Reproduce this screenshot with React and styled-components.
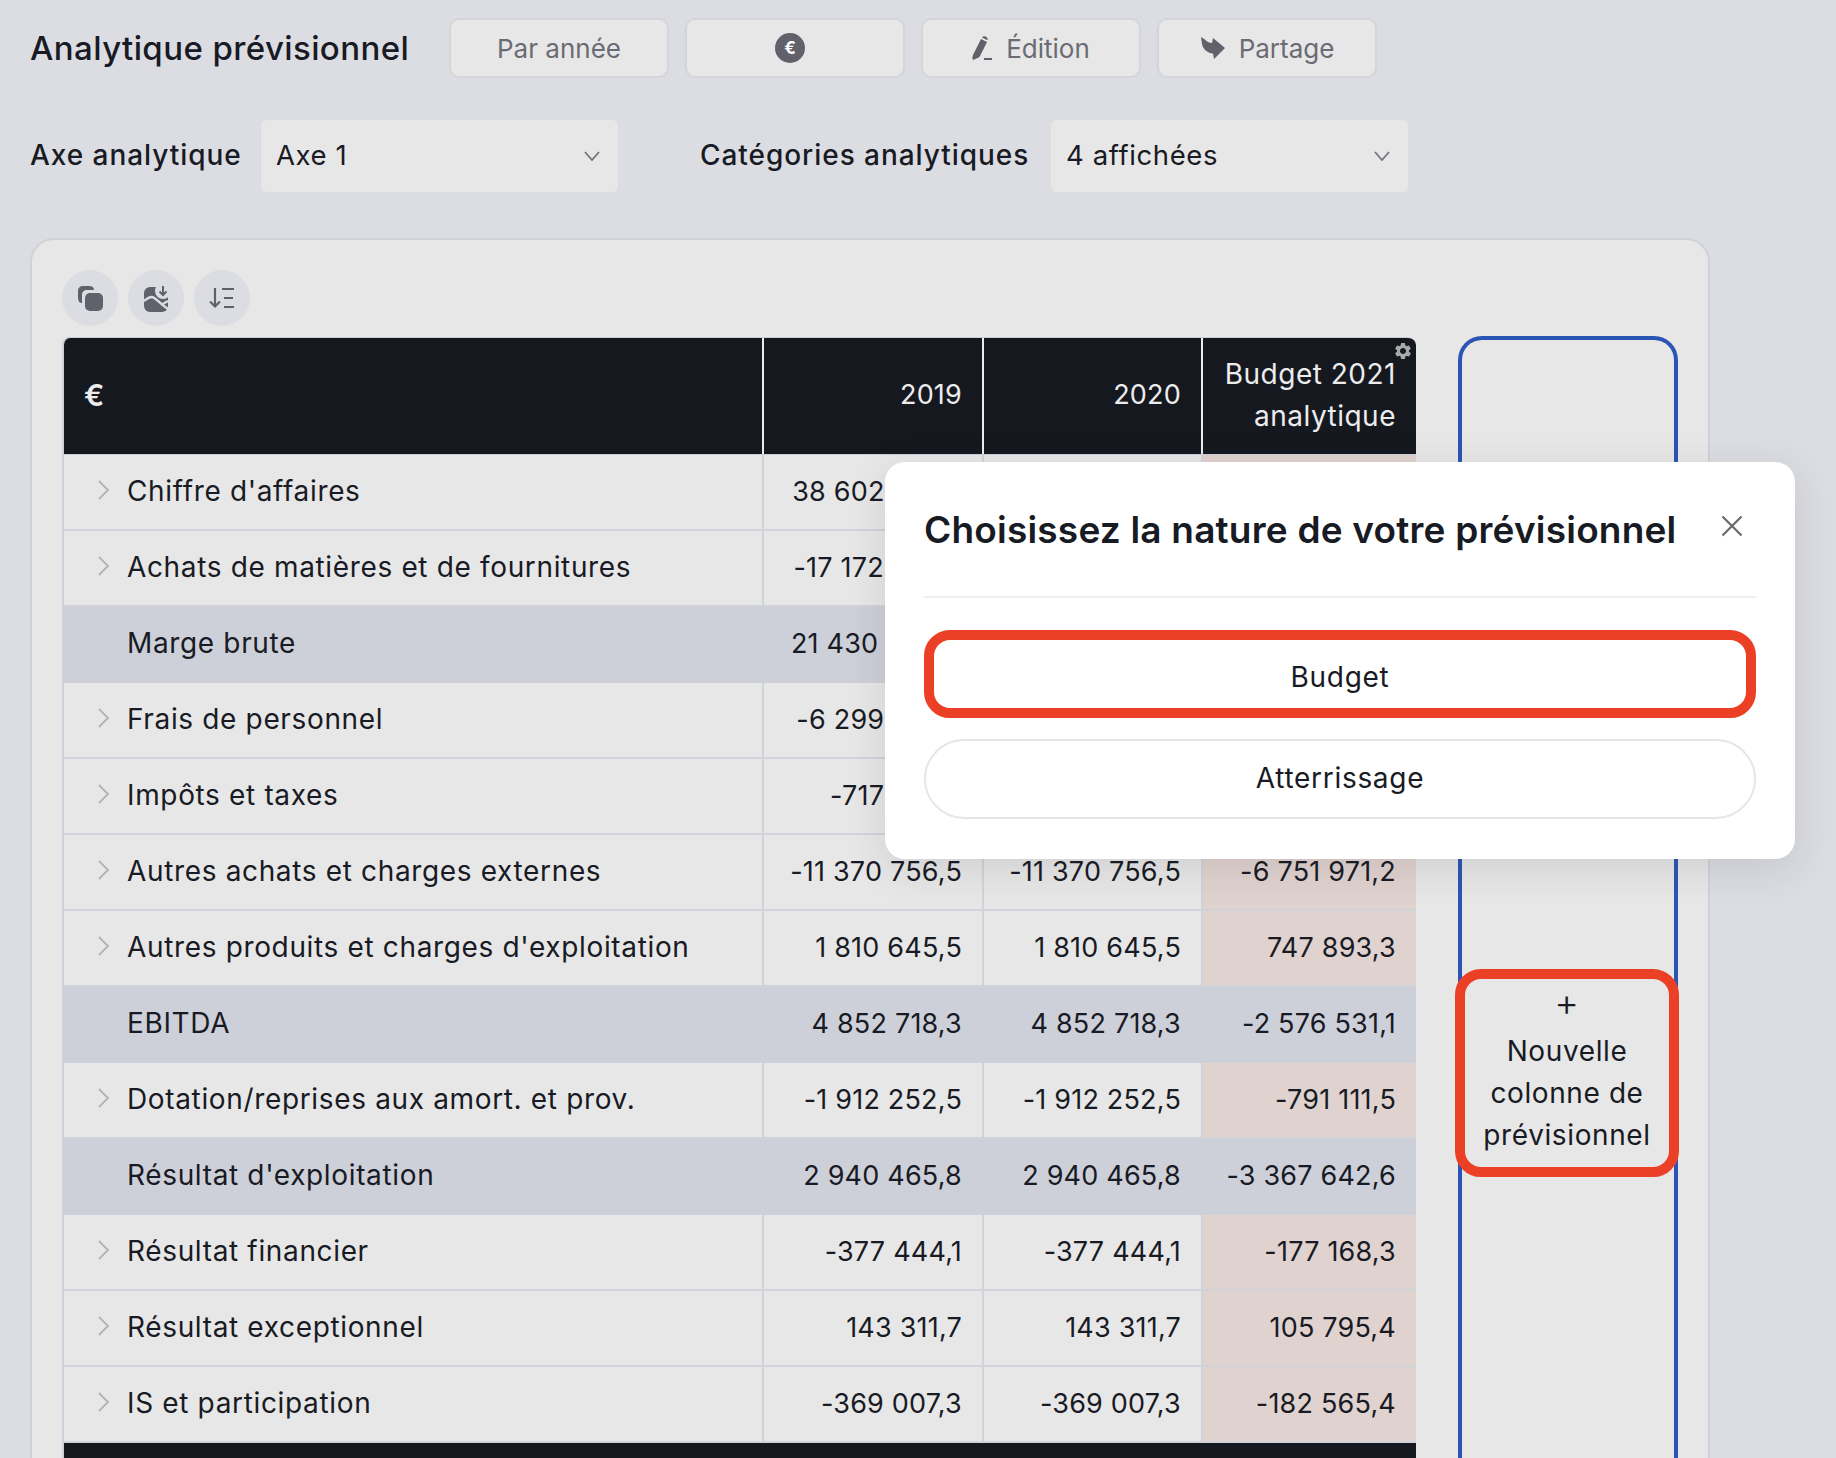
import styled, { createGlobalStyle } from "styled-components";
import { MdSettings } from "react-icons/md";

const GlobalStyle = createGlobalStyle`
  html, body {
    margin: 0;
    padding: 0;
    background: #dcdde2;
  }
  body {
    font-family: "Inter", "Noto Sans", sans-serif;
    color: #181a24;
  }
`;

const Page = styled.div`
  position: relative;
  height: 1458px;
  overflow: hidden;
  padding: 18px 0 0 30px;
  box-sizing: border-box;
`;

const TopBar = styled.div`
  display: flex;
  align-items: center;
  height: 60px;
`;

const Title = styled.h1`
  width: 419px;
  margin: 0;
  font-size: 33px;
  font-weight: 500;
  letter-spacing: 0.4px;
`;

const Actions = styled.div`
  display: flex;
  gap: 16px;
`;

const ActionButton = styled.button`
  display: flex;
  align-items: center;
  justify-content: center;
  gap: 14px;
  width: 220px;
  height: 60px;
  padding: 0;
  background: #e7e7e7;
  border: 2px solid #d3d5db;
  border-radius: 10px;
  color: #6a6b73;
  font-family: inherit;
  font-size: 26px;
`;

const EuroBadge = styled.span`
  display: flex;
  align-items: center;
  justify-content: center;
  width: 30px;
  height: 30px;
  margin-right: 10px;
  border-radius: 50%;
  background: #60616a;
  color: #fff;
  font-size: 17px;
  font-weight: 700;
`;

const Filters = styled.div`
  display: flex;
  align-items: center;
  height: 72px;
  margin-top: 42px;
`;

const FilterLabel = styled.label`
  width: ${(p) => p.$width}px;
  margin-top: -2px;
  font-size: 28px;
  font-weight: 500;
  letter-spacing: 0.95px;
`;

const Select = styled.div`
  display: flex;
  align-items: center;
  justify-content: space-between;
  box-sizing: border-box;
  width: 357px;
  height: 72px;
  margin-right: ${(p) => p.$after || 0}px;
  padding: 0 18px 0 15px;
  background: #e7e7e7;
  border-radius: 6px;
  font-size: 27.500px;
  letter-spacing: 0.6px;
`;

const SelectText = styled.span`
  margin-top: -2px;
`;

const Panel = styled.section`
  box-sizing: border-box;
  width: 1680px;
  height: 1300px;
  margin-top: 46px;
  padding: 30px 30px 0;
  background: #e7e7e7;
  border: 2px solid #d0d2d9;
  border-radius: 24px;
`;

const Toolbar = styled.div`
  display: flex;
  gap: 10px;
  margin-bottom: 11px;
`;

const RoundButton = styled.button`
  display: flex;
  align-items: center;
  justify-content: center;
  width: 56px;
  height: 56px;
  padding: 0;
  background: #dcdde2;
  border: 0;
  border-radius: 50%;
`;

const PanelBody = styled.div`
  display: flex;
  gap: 42px;
`;

const Table = styled.div`
  width: 1354px;
  box-sizing: border-box;
  border-left: 2px solid #cdd0d9;
  border-top: 1px solid #cdd0d9;
  border-radius: 8px 8px 0 0;
  overflow: hidden;
`;

const Row = styled.div`
  display: grid;
  grid-template-columns: 698px 220px 219px 215px;
  height: 76px;
  box-sizing: border-box;
  background: ${(p) => (p.$total ? "#cdd0d9" : "transparent")};
  border-bottom: 2px solid ${(p) => (p.$total ? "#cdd0d9" : "#d1d3da")};
  font-size: 27px;
  letter-spacing: 0.2px;
`;

const HeadRow = styled(Row)`
  height: 117px;
  background: #161820;
  border-bottom: 1px solid #cdd0d9;
  color: #ececec;
`;

const FootRow = styled(Row)`
  background: #161820;
  border-bottom: 0;
`;

const LabelCell = styled.div`
  position: relative;
  display: flex;
  align-items: center;
  padding: 0 0 2px 63px;
  font-size: 28px;
  letter-spacing: 0.65px;
`;

const HeadLabel = styled(LabelCell)`
  padding-left: 20px;
  font-size: 30px;
  font-weight: 600;
`;

const Chevron = styled.svg`
  position: absolute;
  left: 33px;
  top: 25px;
`;

const Cell = styled.div`
  display: flex;
  align-items: center;
  justify-content: flex-end;
  box-sizing: border-box;
  padding: 0 20px 2px 0;
  border-left: 2px solid #d1d3da;
  background: ${(p) => (p.$budget ? "#e0d2ce" : "transparent")};
`;

const TotalCell = styled(Cell)`
  border-left-color: #cdd0d9;
`;

const HeadCell = styled(Cell)`
  position: relative;
  border-left-color: #ececec;
  text-align: right;
  line-height: 42px;
`;

const ColumnName = styled.span`
  font-size: 28px;
  letter-spacing: 0.5px;
`;

const Gear = styled(MdSettings)`
  position: absolute;
  top: 3px;
  right: 3px;
  color: #a9a9a9;
`;

const NewColumn = styled.div`
  box-sizing: border-box;
  width: 220px;
  height: 1200px;
  margin-top: -1px;
  padding-top: 629px;
  border: 4px solid #2a55b4;
  border-bottom: 0;
  border-radius: 24px 24px 0 0;
`;

const AddButton = styled.button`
  display: flex;
  flex-direction: column;
  align-items: center;
  box-sizing: border-box;
  width: 224px;
  height: 208px;
  margin-left: -7px;
  padding: 9px 0 0;
  background: #e7e7e7;
  border: 10px solid #ec4026;
  border-radius: 26px;
  color: #181a24;
  font-family: inherit;
  font-size: 28px;
  letter-spacing: 0.6px;
  line-height: 42px;
`;

const PlusSign = styled.span`
  height: 34px;
  margin: -3px 0 11px;
  font-size: 38px;
  font-weight: 300;
  line-height: 34px;
`;

const Modal = styled.div`
  position: absolute;
  left: 885px;
  top: 462px;
  box-sizing: border-box;
  width: 910px;
  height: 397px;
  padding: 0 39px;
  background: #fff;
  border-radius: 20px;
  box-shadow: 0 10px 40px rgba(40, 44, 60, 0.12);
`;

const ModalHead = styled.div`
  display: flex;
  align-items: center;
  justify-content: space-between;
  height: 134px;
  padding-right: 13px;
  border-bottom: 2px solid #efefef;
`;

const ModalTitle = styled.h2`
  margin: 0;
  font-size: 37px;
  font-weight: 600;
  letter-spacing: 0.2px;
`;

const CloseButton = styled.svg`
  margin-top: -6px;
`;

const Choices = styled.div`
  display: flex;
  flex-direction: column;
  gap: 21px;
  margin-top: 32px;
`;

const Choice = styled.button`
  height: ${(p) => (p.$marked ? 88 : 80)}px;
  padding: ${(p) => (p.$marked ? "5px 0 0" : "0 0 3px")};
  background: #fff;
  border: ${(p) => (p.$marked ? "10px solid #ec4026" : "2px solid #e6e6e6")};
  border-radius: ${(p) => (p.$marked ? 26 : 40)}px;
  color: #181a24;
  font-family: inherit;
  font-size: 28px;
  letter-spacing: 0.7px;
`;

const CopyIcon = () => (
  <svg width="27" height="27" viewBox="0 0 27 27">
    <path d="M6 1h6c3 0 5 1.500 5 4H10C7 5 5 7 5 10v8C2.500 18 1 16 1 13V6c0-3 2-5 5-5z" fill="#60616a" />
    <rect x="8" y="8" width="18" height="18" rx="5" fill="#60616a" />
  </svg>
);

const ImageDownloadIcon = () => (
  <svg width="26" height="27" viewBox="0 0 26 27">
    <rect x="1" y="2" width="24" height="25" rx="6" fill="#60616a" />
    <circle cx="20" cy="6" r="8" fill="#dcdde2" />
    <path d="M20 1v9M16.500 6.500l3.500 3.500 3.500-3.500" fill="none" stroke="#60616a" strokeWidth="2" />
    <path d="M1 16c3-2.500 6-4 8-4 3 0 8 7 16 12M18 20l7-4" fill="none" stroke="#dcdde2" strokeWidth="2.400" />
  </svg>
);

const SortIcon = () => (
  <svg width="26" height="22" viewBox="0 0 26 22">
    <path d="M6 1v18M1 14.500l5 5 5-5" fill="none" stroke="#60616a" strokeWidth="2.200" />
    <path d="M13 2h12M15 11h9M15 20h10" fill="none" stroke="#60616a" strokeWidth="2.200" />
  </svg>
);

const PencilIcon = () => (
  <svg width="20" height="25" viewBox="0 0 20 25">
    <path d="M9 3l6 3-7 14c-1 1.500-2 2-3.500 2.500L1 24c-.8-1.500-.8-3 0-5z" fill="#60616a" />
    <path d="M10 1.500c1-1.200 2.500-1.500 4-.7 1.500.9 2 2.200 1.500 3.500z" fill="#60616a" />
    <path d="M12 23h8" stroke="#60616a" strokeWidth="2" />
  </svg>
);

const ShareIcon = () => (
  <svg width="25" height="25" viewBox="0 0 25 25">
    <path d="M1 1l4 2.500c1 1.500 4 3.500 7 3.500l1-5 12 10-11 11-1-5.500C7 17 3 13 2 8z" fill="#60616a" />
  </svg>
);

const ChevronDown = () => (
  <svg width="16" height="10" viewBox="0 0 16 10">
    <path d="M1 1l7 8 7-8" fill="none" stroke="#73747b" strokeWidth="1.800" />
  </svg>
);

const rows = [
  { label: "Chiffre d'affaires", a: "38 602 301,8", chevron: true },
  { label: "Achats de matières et de fournitures", a: "-17 172 019,4", chevron: true },
  { label: "Marge brute", a: "21 430 282,4", total: true },
  { label: "Frais de personnel", a: "-6 299 301,2", chevron: true },
  { label: "Impôts et taxes", a: "-717 152,4", chevron: true },
  { label: "Autres achats et charges externes", a: "-11 370 756,5", b: "-11 370 756,5", c: "-6 751 971,2", chevron: true },
  { label: "Autres produits et charges d'exploitation", a: "1 810 645,5", b: "1 810 645,5", c: "747 893,3", chevron: true },
  { label: "EBITDA", a: "4 852 718,3", b: "4 852 718,3", c: "-2 576 531,1", total: true },
  { label: "Dotation/reprises aux amort. et prov.", a: "-1 912 252,5", b: "-1 912 252,5", c: "-791 111,5", chevron: true },
  { label: "Résultat d'exploitation", a: "2 940 465,8", b: "2 940 465,8", c: "-3 367 642,6", total: true },
  { label: "Résultat financier", a: "-377 444,1", b: "-377 444,1", c: "-177 168,3", chevron: true },
  { label: "Résultat exceptionnel", a: "143 311,7", b: "143 311,7", c: "105 795,4", chevron: true },
  { label: "IS et participation", a: "-369 007,3", b: "-369 007,3", c: "-182 565,4", chevron: true },
];

const App = () => {
  return (
    <Page>
      <GlobalStyle />
      <TopBar>
        <Title>Analytique prévisionnel</Title>
        <Actions>
          <ActionButton>Par année</ActionButton>
          <ActionButton>
            <EuroBadge>€</EuroBadge>
          </ActionButton>
          <ActionButton>
            <PencilIcon />
            Édition
          </ActionButton>
          <ActionButton>
            <ShareIcon />
            Partage
          </ActionButton>
        </Actions>
      </TopBar>

      <Filters>
        <FilterLabel $width={231}>Axe analytique</FilterLabel>
        <Select $after={82}>
          <SelectText>Axe 1</SelectText>
          <ChevronDown />
        </Select>
        <FilterLabel $width={351}>Catégories analytiques</FilterLabel>
        <Select>
          <SelectText>4 affichées</SelectText>
          <ChevronDown />
        </Select>
      </Filters>

      <Panel>
        <Toolbar>
          <RoundButton>
            <CopyIcon />
          </RoundButton>
          <RoundButton>
            <ImageDownloadIcon />
          </RoundButton>
          <RoundButton>
            <SortIcon />
          </RoundButton>
        </Toolbar>

        <PanelBody>
          <Table>
            <HeadRow>
              <HeadLabel>€</HeadLabel>
              <HeadCell>2019</HeadCell>
              <HeadCell>2020</HeadCell>
              <HeadCell>
                <Gear size={20} />
                <ColumnName>
                  Budget 2021
                  <br />
                  analytique
                </ColumnName>
              </HeadCell>
            </HeadRow>
            {rows.map((row) => {
              const ValueCell = row.total ? TotalCell : Cell;
              return (
                <Row key={row.label} $total={row.total}>
                  <LabelCell>
                    {row.chevron && (
                      <Chevron width="14" height="20" viewBox="0 0 14 20">
                        <path d="M2 1l9 9-9 9" fill="none" stroke="#b4b4b4" strokeWidth="1.800" />
                      </Chevron>
                    )}
                    {row.label}
                  </LabelCell>
                  <ValueCell>{row.a}</ValueCell>
                  <ValueCell>{row.b}</ValueCell>
                  <ValueCell $budget={!row.total}>{row.c}</ValueCell>
                </Row>
              );
            })}
            <FootRow />
          </Table>

          <NewColumn>
            <AddButton>
              <PlusSign>+</PlusSign>
              <span>Nouvelle</span>
              <span>colonne de</span>
              <span>prévisionnel</span>
            </AddButton>
          </NewColumn>
        </PanelBody>
      </Panel>

      <Modal>
        <ModalHead>
          <ModalTitle>Choisissez la nature de votre prévisionnel</ModalTitle>
          <CloseButton width="22" height="22" viewBox="0 0 22 22">
            <path d="M1.500 1.500l19 19M20.500 1.500l-19 19" fill="none" stroke="#6a6a6a" strokeWidth="2.200" />
          </CloseButton>
        </ModalHead>
        <Choices>
          <Choice $marked>Budget</Choice>
          <Choice>Atterrissage</Choice>
        </Choices>
      </Modal>
    </Page>
  );
};

export default App;
